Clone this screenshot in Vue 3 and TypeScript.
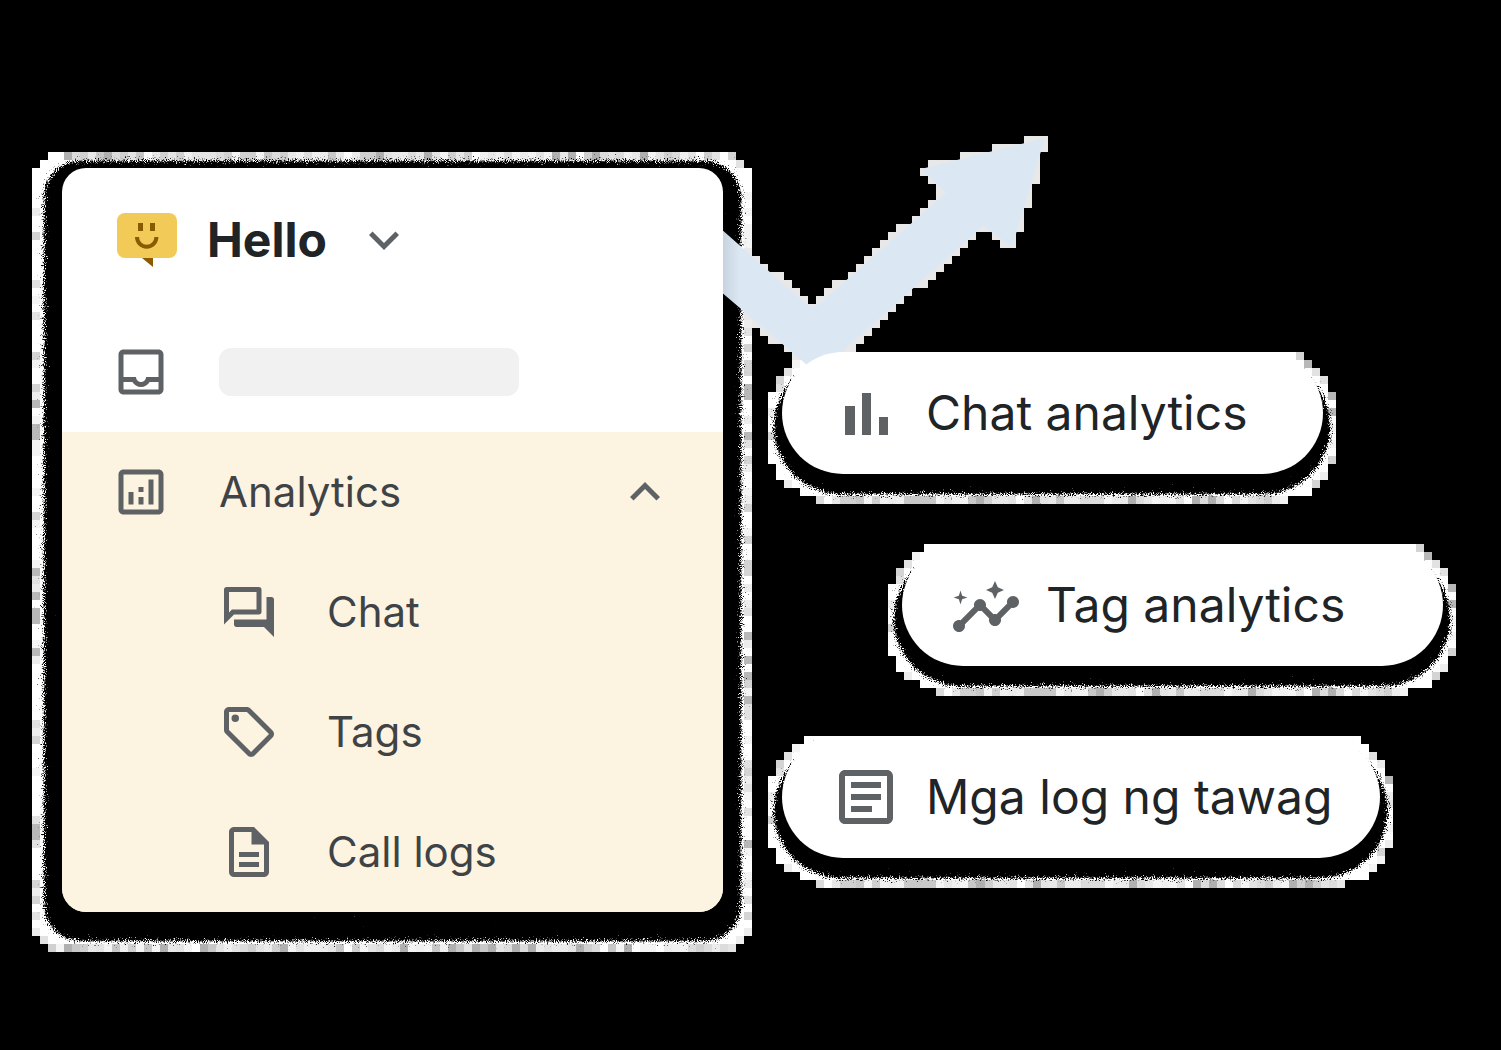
<script setup lang="ts">
type Row = [y: number, height: number, left: number, right: number]
type Point = [number, number]
interface Cell { x: number; y: number; fill: string }
interface Halo { width: number; height: number; path: string; cells: Cell[] }

const CELL = 8
const SIDE_SHADES = ['#ffffff', '#f4f4f4', '#ffffff', '#e2e2e2', '#ffffff', '#b8b8b8', '#ffffff', '#ededed', '#ffffff', '#d4d4d4']
const EDGE_SHADES = ['#ffffff', '#e4e4e4', '#f4f4f4', '#c8c8c8', '#ececec', '#b0b0b0', '#dcdcdc', '#f0f0f0', '#d0d0d0', '#e8e8e8']

function hash(x: number, y: number): number {
  let h = Math.imul(x + 31, 374761393) + Math.imul(y + 17, 668265263)
  h = Math.imul(h ^ (h >>> 13), 1274126177)
  return (h ^ (h >>> 16)) >>> 0
}

// Each row is a band of blocks; shaded blocks sit only on the outer rim.
function makeHalo(rows: Row[], shadeTop: boolean): Halo {
  const width = Math.max(...rows.map((r) => r[3]))
  const last = rows[rows.length - 1]
  const height = last[0] + last[1]
  const path = rows.map(([y, h, l, r]) => `M${l} ${y}H${r}V${y + h}H${l}z`).join('')
  const cells: Cell[] = []
  const add = (x: number, y: number, shades: string[]) => {
    cells.push({ x, y, fill: shades[hash(x, y) % shades.length] })
  }
  for (const [y, h, l, r] of rows) {
    for (let dy = 0; dy < h; dy += CELL) {
      add(l, y + dy, SIDE_SHADES)
      add(r - CELL, y + dy, SIDE_SHADES)
    }
  }
  for (let x = last[2]; x < last[3]; x += CELL) add(x, last[0], EDGE_SHADES)
  if (shadeTop) for (let x = rows[0][2] + 16; x < rows[0][3] - 16; x += CELL) add(x, 0, EDGE_SHADES)
  return { width, height, path, cells }
}

const menuHalo = makeHalo([
  [0, 8, 16, 704], [8, 8, 8, 712], [16, 768, 0, 720], [784, 8, 8, 712], [792, 8, 16, 704],
], true)

function pillRows(w: number): Row[] {
  return [
    [0, 8, 36, w - 32], [8, 8, 24, w - 24], [16, 8, 16, w - 16], [24, 16, 8, w - 8],
    [40, 72, 0, w], [112, 16, 8, w - 8], [128, 8, 16, w - 16], [136, 8, 32, w - 24], [144, 8, 48, w - 48],
  ]
}

const pills = [
  { label: 'Chat analytics', icon: 'bars', halo: makeHalo(pillRows(568), false) },
  { label: 'Tag analytics', icon: 'insights', halo: makeHalo(pillRows(568), false) },
  { label: 'Mga log ng tawag', icon: 'article', halo: makeHalo(pillRows(624), false) },
]

// Trend arrow, with its origin 3px left of the menu's right edge.
const arrow: Point[] = [
  [0, 92], [86, 168], [92, 171], [99, 168], [226, 57], [201, 33], [325, 2],
  [292, 111], [263, 90], [124, 214], [124, 240], [100, 240], [0, 155],
]
const arrowPoints = arrow.map((p) => p.join(',')).join(' ')

function inside(x: number, y: number): boolean {
  let hit = false
  for (let i = 0, j = arrow.length - 1; i < arrow.length; j = i++) {
    const [xi, yi] = arrow[i]
    const [xj, yj] = arrow[j]
    if (yi > y !== yj > y && x < ((xj - xi) * (y - yi)) / (yj - yi) + xi) hit = !hit
  }
  return hit
}

const arrowCells: Point[] = []
for (let y = 0; y < 224; y += CELL) {
  for (let x = 24; x < 336; x += CELL) {
    let touched = false
    for (let a = 1; a < CELL; a += 2) {
      for (let b = 1; b < CELL; b += 2) touched = touched || inside(x + a, y + b)
    }
    if (touched) arrowCells.push([x, y])
  }
}

const children = [
  {
    label: 'Chat',
    path: 'M15 4v7H5.17L4 12.17V4h11m1-2H3c-.55 0-1 .45-1 1v14l4-4h10c.55 0 1-.45 1-1V3c0-.55-.45-1-1-1zm5 4h-2v9H6v2c0 .55.45 1 1 1h11l4 4V7c0-.55-.45-1-1-1z',
  },
  {
    label: 'Tags',
    path: 'M21.41 11.41l-8.83-8.83c-.37-.37-.88-.58-1.41-.58H4c-1.1 0-2 .9-2 2v7.17c0 .53.21 1.04.59 1.41l8.83 8.83c.78.78 2.05.78 2.83 0l7.17-7.17c.78-.78.78-2.04-.01-2.83zM12.83 20L4 11.17V4h7.17L20 12.83 12.83 20zM6.5 5a1.5 1.5 0 1 0 0 3 1.5 1.5 0 0 0 0-3z',
  },
  {
    label: 'Call logs',
    path: 'M8 16h8v2H8zm0-4h8v2H8zm6-10H6c-1.1 0-2 .9-2 2v16c0 1.1.89 2 1.99 2H18c1.1 0 2-.9 2-2V8l-6-6zm4 18H6V4h7v5h5v11z',
  },
]
</script>

<template>
  <main class="stage">
    <svg class="defs" width="0" height="0" aria-hidden="true">
      <filter id="grain" x="-10%" y="-20%" width="120%" height="140%" color-interpolation-filters="sRGB">
        <feGaussianBlur in="SourceAlpha" stdDeviation="4" result="soft" />
        <feTurbulence type="fractalNoise" baseFrequency="0.9" numOctaves="2" seed="4" result="noise" />
        <feComposite in="soft" in2="noise" operator="arithmetic" k1="0" k2="1" k3="1.2" k4="-0.6" result="mix" />
        <feComponentTransfer in="mix" result="cut">
          <feFuncA type="linear" slope="5" intercept="-1.900" />
        </feComponentTransfer>
        <feColorMatrix in="cut" type="matrix" values="0 0 0 0 0  0 0 0 0 0  0 0 0 0 0  0 0 0 1 0" />
      </filter>
    </svg>

    <section class="menu-wrap">
      <svg class="halo menu-halo" :viewBox="`0 0 ${menuHalo.width} ${menuHalo.height}`" preserveAspectRatio="none" aria-hidden="true">
        <g shape-rendering="crispEdges">
          <path :d="menuHalo.path" fill="#fff" />
          <rect v-for="(c, i) in menuHalo.cells" :key="i" :x="c.x" :y="c.y" width="8" height="8" :fill="c.fill" />
        </g>
        <rect x="12" y="9" width="697" height="780" rx="36" filter="url(#grain)" />
      </svg>

      <svg class="arrow" viewBox="0 0 336 240" aria-hidden="true">
        <defs>
          <linearGradient id="fold" x1="0" x2="1">
            <stop offset="0" stop-color="#c3d0dc" />
            <stop offset="0.06" stop-color="#dbe8f3" />
          </linearGradient>
        </defs>
        <rect v-for="(c, i) in arrowCells" :key="i" :x="c[0]" :y="c[1]" width="8" height="8" fill="#e8e8e8" shape-rendering="crispEdges" />
        <polygon :points="arrowPoints" fill="url(#fold)" />
      </svg>

      <nav class="menu">
        <button class="workspace" type="button">
          <svg class="logo" viewBox="0 0 60 60" aria-hidden="true">
            <path d="M25 48h11v9z" fill="#8a5a00" />
            <rect y="3" width="60" height="45" rx="8" fill="#f2ca57" />
            <path d="M21 13h5v8h-5zM33 13h5v8h-5z" fill="#8a5a00" />
            <path d="M20 27a9.700 9.700 0 0 0 19.400 0" fill="none" stroke="#8a5a00" stroke-width="4" />
          </svg>
          <span>Hello</span>
          <svg class="icon" viewBox="0 0 24 24" aria-hidden="true"><path d="M16.590 8.590L12 13.170 7.410 8.590 6 10l6 6 6-6z" /></svg>
        </button>
        <div class="row">
          <svg class="icon" viewBox="0 0 24 24" aria-hidden="true"><path d="M19 3H5c-1.100 0-2 .9-2 2v14c0 1.100.9 2 2 2h14c1.100 0 2-.9 2-2V5c0-1.100-.9-2-2-2zm0 16H5v-3h3.560c.69 1.190 1.970 2 3.450 2s2.750-.81 3.450-2H19v3zm0-5h-4.990c0 1.100-.9 2-2 2s-2-.9-2-2H5V5h14v9z" /></svg>
          <span class="placeholder"></span>
        </div>
        <div class="group">
          <button class="row" type="button" aria-expanded="true">
            <svg class="icon" viewBox="0 0 24 24" aria-hidden="true"><path d="M19 3H5c-1.100 0-2 .9-2 2v14c0 1.100.9 2 2 2h14c1.100 0 2-.9 2-2V5c0-1.100-.9-2-2-2zm0 16H5V5h14v14zM7 12h2v5H7zM15 7h2v10h-2zM11 14h2v3h-2zM11 10h2v2h-2z" /></svg>
            <span>Analytics</span>
            <svg class="icon caret" viewBox="0 0 24 24" aria-hidden="true"><path d="M12 8l-6 6 1.410 1.410L12 10.830l4.590 4.580L18 14z" /></svg>
          </button>
          <a v-for="c in children" :key="c.label" class="row child" href="#">
            <svg class="icon" viewBox="0 0 24 24" aria-hidden="true"><path :d="c.path" fill-rule="evenodd" /></svg>
            <span>{{ c.label }}</span>
          </a>
        </div>
      </nav>
    </section>

    <section class="pills">
      <div v-for="p in pills" :key="p.label" class="pill-wrap">
        <svg class="halo pill-halo" :viewBox="`0 0 ${p.halo.width} ${p.halo.height}`" preserveAspectRatio="none" aria-hidden="true">
          <g shape-rendering="crispEdges">
            <path :d="p.halo.path" fill="#fff" />
            <rect v-for="(c, i) in p.halo.cells" :key="i" :x="c.x" :y="c.y" width="8" height="8" :fill="c.fill" />
          </g>
          <rect x="6" y="8" :width="p.halo.width - 12" height="134" rx="67" filter="url(#grain)" />
          <rect x="60" y="0" :width="p.halo.width - 120" height="40" fill="#fff" />
        </svg>
        <button class="pill" type="button">
          <svg v-if="p.icon === 'bars'" class="pill-icon" viewBox="0 0 72 72" aria-hidden="true"><path d="M15 29h10v29H15zM32 16h9v42h-9zM49 40h9v18h-9z" /></svg>
          <svg v-else-if="p.icon === 'insights'" class="pill-icon" viewBox="0 -1 24 24" aria-hidden="true">
            <path d="M21 8c-1.450 0-2.260 1.440-1.930 2.510l-3.550 3.560c-.3-.09-.74-.09-1.040 0l-2.550-2.550C12.270 10.450 11.460 9 10 9c-1.450 0-2.270 1.440-1.930 2.520l-4.560 4.550C2.440 15.740 1 16.550 1 18c0 1.100.9 2 2 2 1.450 0 2.260-1.440 1.930-2.510l4.550-4.560c.3.09.74.09 1.040 0l2.550 2.550C12.730 16.550 13.540 18 15 18c1.450 0 2.270-1.440 1.930-2.520l3.560-3.550C21.560 12.260 23 11.450 23 10c0-1.100-.9-2-2-2z" />
            <path d="M15 3l.94 2.070L18 6l-2.060.93L15 9l-.94-2.070L12 6l2.060-.93zM3.500 6.200l.55 1.750 1.750.55-1.750.55-.55 1.750-.55-1.750-1.750-.55 1.750-.55z" />
          </svg>
          <svg v-else class="pill-icon" viewBox="0 0 24 24" aria-hidden="true"><path d="M19 3H5c-1.100 0-2 .9-2 2v14c0 1.100.9 2 2 2h14c1.100 0 2-.9 2-2V5c0-1.100-.9-2-2-2zm0 16H5V5h14v14zM7 7h10v2H7zM7 11h10v2H7zM7 15h7v2H7z" /></svg>
          <span>{{ p.label }}</span>
        </button>
      </div>
    </section>
  </main>
</template>

<style>
body {
  background: #000;
}
</style>

<style scoped>
.stage {
  box-sizing: border-box;
  display: flex;
  align-items: flex-start;
  min-height: 100vh;
  padding: 168px 58px 48px 62px;
  overflow: hidden;
  background: #000;
  font-family: Inter, "Liberation Sans", sans-serif;
}

.defs {
  position: absolute;
}

.menu-wrap {
  position: relative;
  flex: 0 1 661px;
}

.halo {
  position: absolute;
  z-index: 0;
  overflow: visible;
}

.menu-halo {
  top: -16px;
  left: -30px;
  width: calc(100% + 59px);
  height: calc(100% + 56px);
}

.arrow {
  position: absolute;
  z-index: 1;
  top: -32px;
  left: calc(100% - 3px);
  width: 336px;
  height: 240px;
}

.menu {
  position: relative;
  z-index: 2;
  overflow: hidden;
  border-radius: 24px;
  background: #fff;
}

button {
  border: 0;
  background: none;
  color: inherit;
  font: inherit;
  text-align: left;
  cursor: pointer;
}

.workspace {
  display: flex;
  align-items: center;
  width: 100%;
  height: 144px;
  padding: 0 48px 0 55px;
  color: #202426;
  font-size: 48px;
  font-weight: 700;
  line-height: 60px;
}

.logo {
  width: 60px;
  height: 60px;
  margin-right: 30px;
}

.workspace .icon {
  margin-left: 27px;
}

.icon {
  flex: none;
  width: 60px;
  height: 60px;
  fill: #5f6265;
}

.row {
  box-sizing: border-box;
  display: flex;
  align-items: center;
  gap: 48px;
  width: 100%;
  height: 120px;
  padding: 0 48px 0 49px;
  color: #3f4345;
  font-size: 42px;
  line-height: 60px;
  text-decoration: none;
}

.placeholder {
  width: 300px;
  height: 48px;
  border-radius: 12px;
  background: #f1f1f1;
}

.group {
  background: #fdf3e1;
}

.caret {
  margin-left: auto;
}

.child {
  padding-left: 157px;
}

.pills {
  display: flex;
  flex: 1;
  flex-direction: column;
  align-items: flex-start;
  gap: 70px;
  padding: 184px 0 0 59px;
}

.pill-wrap {
  position: relative;
}

.pill-wrap:nth-child(2) {
  margin-left: 120px;
}

.pill-halo {
  top: 0;
  left: -14px;
  width: calc(100% + 27px);
  height: calc(100% + 30px);
}

.pill {
  position: relative;
  z-index: 2;
  box-sizing: border-box;
  display: flex;
  align-items: center;
  gap: 24px;
  min-width: 541px;
  height: 122px;
  padding: 0 48px;
  border-radius: 61px;
  background: #fff;
  color: #202426;
  font-size: 48px;
  line-height: 60px;
  white-space: nowrap;
}

.pill-icon {
  flex: none;
  width: 72px;
  height: 72px;
  fill: #5f6265;
}
</style>
